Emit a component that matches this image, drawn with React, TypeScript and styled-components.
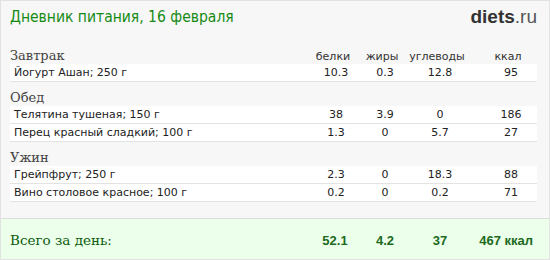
import styled, { createGlobalStyle } from 'styled-components'

const GlobalStyle = createGlobalStyle`
    body {
        margin: 0;
        background: #ffffff;
    }
`

const Card = styled.div`
    box-sizing: border-box;
    width: 550px;
    height: 260px;
    border: 1px solid #e2e2e2;
    background-color: #f7f7f7;
    display: flex;
    flex-direction: column;
`

const Header = styled.div`
    box-sizing: border-box;
    display: flex;
    justify-content: space-between;
    align-items: flex-start;
    padding: 7px 12px 0 9px;
    height: 39px;
`

const Title = styled.h1`
    margin: 0;
    font-family: 'DejaVu Sans Condensed', 'DejaVu Sans', Verdana, sans-serif;
    font-weight: normal;
    font-size: 15.5px;
    color: #158a15;
`

const Logo = styled.div`
    font-family: 'Liberation Sans', Arial, sans-serif;
    font-size: 19px;
    color: #555;
    margin-top: -2px;

    b {
        color: #333;
    }
`

const Body = styled.div`
    flex: 1;
    padding: 0 12px 0 9px;
`

const Grid = styled.div`
    display: grid;
    grid-template-columns: 1fr 50px 48px 62px 66px;
`

const SectionHead = styled(Grid)`
    box-sizing: border-box;
    height: 24px;
    align-items: end;
    padding-bottom: 1px;
`

const MealName = styled.div`
    font-family: 'DejaVu Serif', Georgia, serif;
    font-size: 13px;
    color: #444;
`

const ColHead = styled.div<{ $shift?: number }>`
    font-family: 'DejaVu Sans', Verdana, sans-serif;
    font-size: 11px;
    color: #333;
    text-align: center;
    padding-right: 6px;
    padding-left: ${(p) => p.$shift ?? 0}px;
`

const Row = styled(Grid)`
    height: 17px;
    align-items: center;
    background: #ffffff;
    border-bottom: 1px solid #e3e3e3;
    font-family: 'DejaVu Sans', Verdana, sans-serif;
    font-size: 11px;
    color: #222;
`

const FoodName = styled.div`
    padding-left: 4px;
`

const Num = styled.div<{ $shift?: number }>`
    text-align: center;
    padding-left: ${(p) => p.$shift ?? 0}px;
`

const Footer = styled(Grid)`
    box-sizing: border-box;
    height: 41px;
    align-items: center;
    border-top: 1px solid #dcdcdc;
    background: #ebffeb;
    padding: 2px 12px 0 9px;
`

const TotalLabel = styled.div`
    font-family: 'DejaVu Serif', Georgia, serif;
    font-size: 13.5px;
    color: #0c5c0c;
`

const TotalNum = styled.div<{ $align?: string; $right?: number }>`
    font-family: 'Liberation Sans', Arial, sans-serif;
    font-weight: bold;
    font-size: 13px;
    color: #1d6a1d;
    white-space: nowrap;
    text-align: ${(p) => p.$align ?? 'center'};
    padding-right: ${(p) => p.$right ?? 0}px;
`

type Food = { name: string; p: string; f: string; c: string; k: string }

const meals: { title: string; foods: Food[] }[] = [
    { title: 'Завтрак', foods: [{ name: 'Йогурт Ашан; 250 г', p: '10.3', f: '0.3', c: '12.8', k: '95' }] },
    {
        title: 'Обед',
        foods: [
            { name: 'Телятина тушеная; 150 г', p: '38', f: '3.9', c: '0', k: '186' },
            { name: 'Перец красный сладкий; 100 г', p: '1.3', f: '0', c: '5.7', k: '27' },
        ],
    },
    {
        title: 'Ужин',
        foods: [
            { name: 'Грейпфрут; 250 г', p: '2.3', f: '0', c: '18.3', k: '88' },
            { name: 'Вино столовое красное; 100 г', p: '0.2', f: '0', c: '0.2', k: '71' },
        ],
    },
]

export default function App() {
    return (
        <>
            <GlobalStyle />
            <Card>
                <Header>
                    <Title>Дневник питания, 16 февраля</Title>
                    <Logo>
                        <b>diets</b>.ru
                    </Logo>
                </Header>
                <Body>
                    {meals.map((meal, i) => (
                        <div key={meal.title}>
                            <SectionHead>
                                <MealName>{meal.title}</MealName>
                                {i === 0 && (
                                    <>
                                        <ColHead>белки</ColHead>
                                        <ColHead>жиры</ColHead>
                                        <ColHead>углеводы</ColHead>
                                        <ColHead $shift={14}>ккал</ColHead>
                                    </>
                                )}
                            </SectionHead>
                            {meal.foods.map((f) => (
                                <Row key={f.name}>
                                    <FoodName>{f.name}</FoodName>
                                    <Num>{f.p}</Num>
                                    <Num>{f.f}</Num>
                                    <Num>{f.c}</Num>
                                    <Num $shift={14}>{f.k}</Num>
                                </Row>
                            ))}
                        </div>
                    ))}
                </Body>
                <Footer>
                    <TotalLabel>Всего за день:</TotalLabel>
                    <TotalNum $right={2}>52.1</TotalNum>
                    <TotalNum>4.2</TotalNum>
                    <TotalNum>37</TotalNum>
                    <TotalNum $align="right" $right={4}>
                        467 ккал
                    </TotalNum>
                </Footer>
            </Card>
        </>
    )
}
